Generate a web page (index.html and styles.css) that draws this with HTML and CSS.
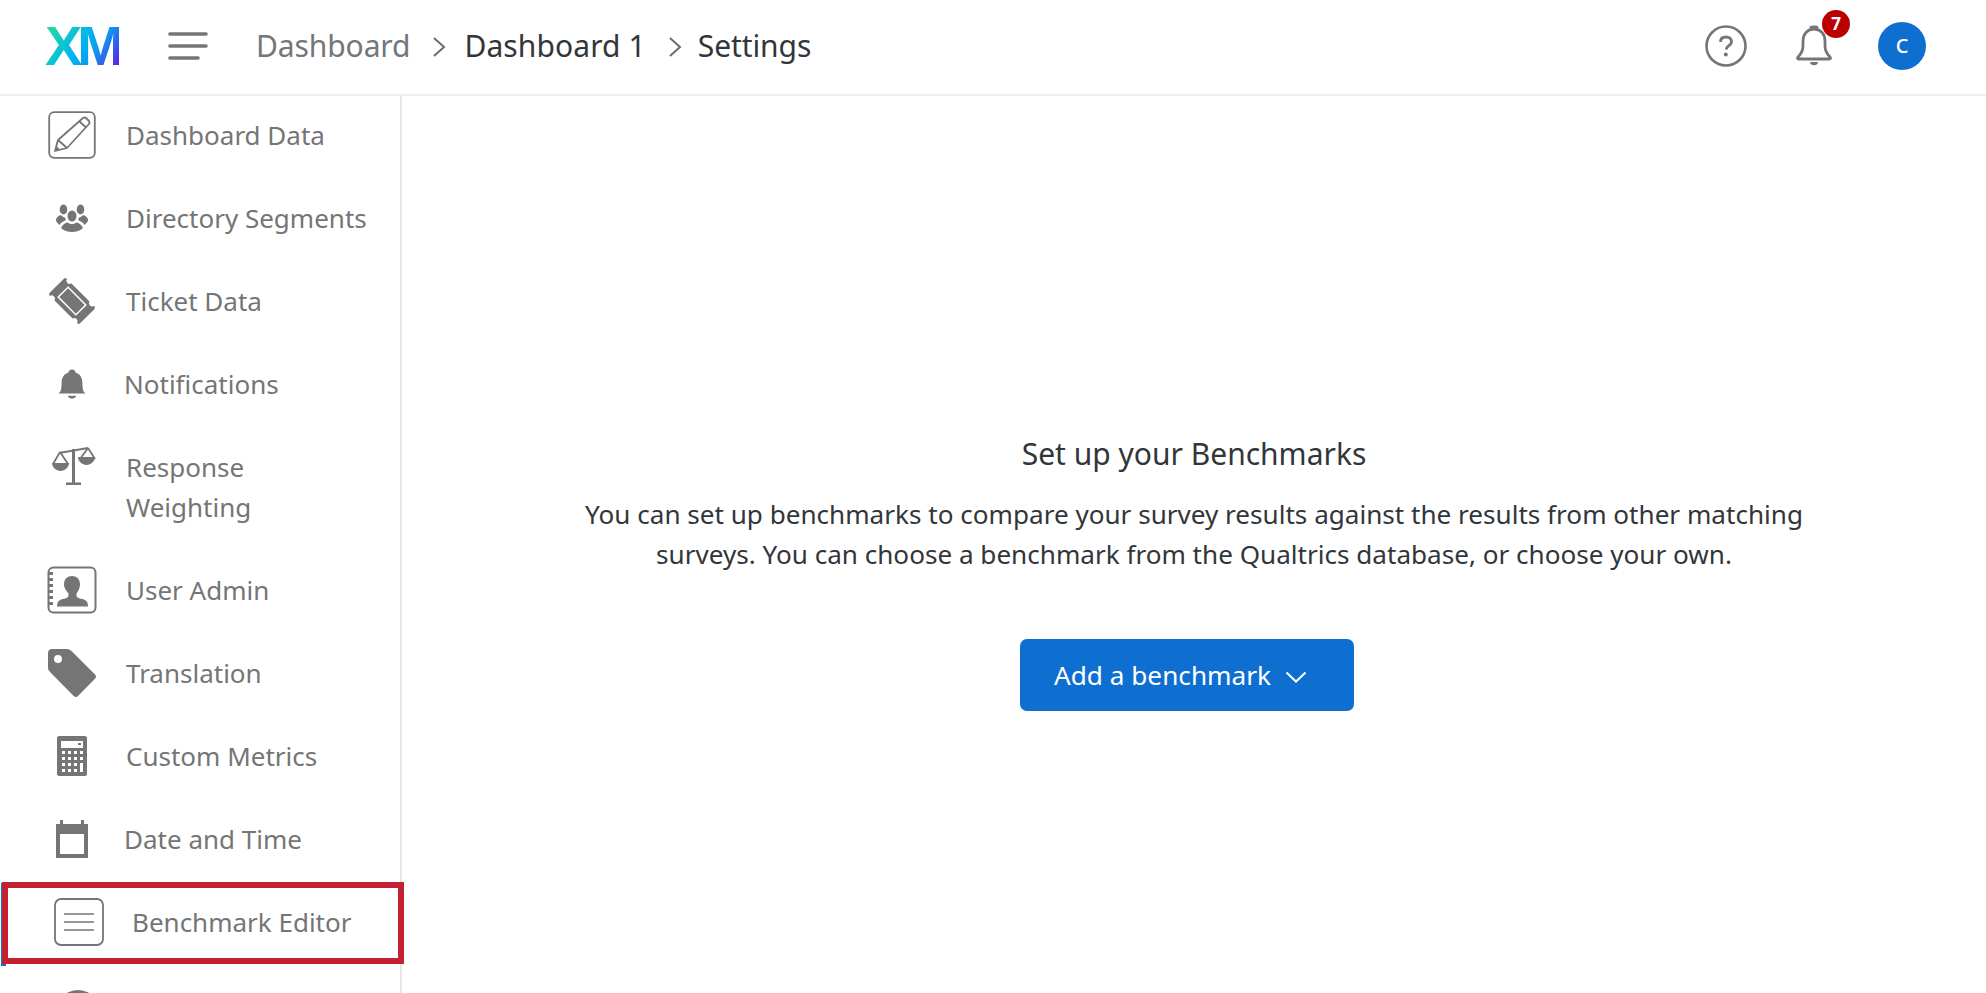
FILE: index.html
```html
<!DOCTYPE html>
<html lang="en">
<head>
<meta charset="utf-8">
<title>Settings</title>
<link rel="stylesheet" href="styles.css">
</head>
<body>
<header class="topbar">
  <div class="logo">XM</div>
  <svg class="burger" viewBox="0 0 40 28" width="40" height="28"><path d="M2 2h36M2 14h36M2 26h28" fill="none" stroke="#757575" stroke-width="3.600" stroke-linecap="round"/></svg>
  <nav class="crumbs">
    <span class="crumb-muted">Dashboard</span>
    <svg class="chev" viewBox="0 0 14 22" width="14" height="22"><path d="M2 2l10 9-10 9" fill="none" stroke="#6a6d70" stroke-width="2"/></svg>
    <span class="crumb-mid">Dashboard 1</span>
    <svg class="chev" viewBox="0 0 14 22" width="14" height="22"><path d="M2 2l10 9-10 9" fill="none" stroke="#6a6d70" stroke-width="2"/></svg>
    <span>Settings</span>
  </nav>
  <div class="actions">
    <svg class="help" viewBox="0 0 42 42" width="42" height="42"><circle cx="21" cy="21" r="19.500" fill="none" stroke="#757575" stroke-width="2.600"/><path d="M15.500 17c0-3.400 2.400-5 5.500-5s5.500 1.700 5.500 4.500c0 2.300-1.300 3.300-2.900 4.400-1.500 1-2.300 1.700-2.300 3.600" fill="none" stroke="#757575" stroke-width="2.800"/><circle cx="20.800" cy="29.500" r="2" fill="#757575"/></svg>
    <div class="bell">
      <svg viewBox="0 0 38 42" width="38" height="42"><path d="M3 32c3-3 5-6 5-11v-5C8 9 12.500 4 19 4s11 5 11 12v5c0 5 2 8 5 11 1 1 .5 2-.8 2H3.800C2.500 34 2 33 3 32z" fill="none" stroke="#757575" stroke-width="2.800" stroke-linejoin="round"/><path d="M15 2.800c1-1.300 7-1.300 8 0" fill="none" stroke="#757575" stroke-width="2.500"/><path d="M15 37h8c0 2-1.800 3.300-4 3.300s-4-1.300-4-3.300z" fill="#757575"/></svg>
      <span class="badge">7</span>
    </div>
    <div class="avatar">C</div>
  </div>
</header>
<div class="body-row">
  <aside class="sidebar">
    <ul class="menu">
      <li class="item item-first">
        <span class="ico"><svg viewBox="0 0 48 48" width="48" height="48"><rect x="1.200" y="1.200" width="45.600" height="45.600" rx="5" fill="none" stroke="#757575" stroke-width="1.800"/><path d="M7 40l3-11L35 7q2-1 3 0l3 3q1 2 0 3L19 37zM10 29l9 8M31.500 10.500l6.500 6" fill="none" stroke="#757575" stroke-width="1.800" stroke-linejoin="round"/><path d="M7 40l1.400-5 3.600 3.400z" fill="#757575"/></svg></span>
        <span class="label">Dashboard Data</span>
      </li>
      <li class="item">
        <span class="ico"><svg viewBox="0 0 32 28" width="32" height="28"><g fill="#757575"><ellipse cx="16" cy="12" rx="4.500" ry="5.500"/><path d="M5 24c1.500-3.500 4-5 6.500-5.500 1.500 1 3 1.500 4.500 1.500s3-.5 4.500-1.500c2.500.5 5 2 6.500 5.500-2.500 2.500-7 4-11 4s-8.500-1.500-11-4z"/><ellipse cx="7.500" cy="5.500" rx="3.800" ry="5"/><ellipse cx="24.500" cy="5.500" rx="3.800" ry="5"/><path d="M0 16c0-2 1-3 4.500-5l3 2 2 1v2.500c-3 1-5 2.500-6 4.500-1.500-1.500-3.500-3-3.500-5zM32 16c0-2-1-3-4.500-5l-3 2-2 1v2.500c3 1 5 2.500 6 4.500 1.500-1.500 3.500-3 3.500-5z"/></g></svg></span>
        <span class="label">Directory Segments</span>
      </li>
      <li class="item">
        <span class="ico"><svg viewBox="-24 -24 48 48" width="48" height="48"><g transform="rotate(45)"><rect x="-21.500" y="-12" width="43" height="24" rx="2" fill="#757575"/><g fill="#fff"><circle cx="-16" cy="-12.500" r="3"/><circle cx="16" cy="-12.500" r="3"/><circle cx="-16" cy="12.500" r="3"/><circle cx="16" cy="12.500" r="3"/></g><rect x="-12.500" y="-7" width="25" height="14" fill="none" stroke="#fff" stroke-width="1.500"/></g></svg></span>
        <span class="label">Ticket Data</span>
      </li>
      <li class="item item-tight">
        <span class="ico"><svg viewBox="6 8 36 38" width="30" height="32"><path fill="#757575" d="M10 36c1-2 1.500-5 1.500-10 0-7 3-11 8-12.500.3-2.500 2-4 4.500-4s4.200 1.500 4.500 4c5 1.500 8 5.500 8 12.500 0 5 .5 8 1.500 10l2 2.500H8zM19 41h10c-.5 2-2.500 3.500-5 3.500S19.500 43 19 41z"/></svg></span>
        <span class="label">Notifications</span>
      </li>
      <li class="item">
        <span class="ico ico-scale"><svg viewBox="0 0 45 40" width="45" height="40"><g fill="none" stroke="#757575" stroke-width="1.800"><path d="M8 7L37 2M9 6L2 18M9 6l8 12M37 2l-8 11M37 2l7 11"/></g><path fill="#757575" d="M1 17h17c0 4-4 8-8.500 8S1 21 1 17zM27 11h17c0 4-4 8-8.500 8S27 15 27 11zM21 3h3v34h-3zM15 36.500h15V39H15z"/></svg></span>
        <span class="label">Response Weighting</span>
      </li>
      <li class="item">
        <span class="ico"><svg viewBox="0 0 50 48" width="50" height="48"><rect x="1.500" y="1.500" width="47" height="45" rx="5" fill="none" stroke="#757575" stroke-width="2"/><path d="M1 6h5v3H1zM1 12h5v3H1zM1 18h5v3H1zM1 24h5v3H1zM1 30h5v3H1zM1 36h5v3H1z" fill="#757575"/><path fill="#757575" d="M25 10c5.500 0 8 4 8 8.500 0 4-2 7-3.500 9V30c0 1 2 2.500 5.500 3 4 .8 6 3 6 7.500H10c0-4.500 2-6.700 6-7.500 3.500-.5 5.500-2 5.500-3v-2.500C20 25.500 17 22.500 17 18.500c0-4.500 2.500-8.500 8-8.500z"/></svg></span>
        <span class="label">User Admin</span>
      </li>
      <li class="item">
        <span class="ico"><svg viewBox="0 0 48 48" width="48" height="48"><path fill-rule="evenodd" fill="#757575" d="M4 0h15c2 0 3.500 1 5 2.500l23 23c1.300 1.300 1.300 3 0 4.300L30 47c-1.300 1.300-3 1.300-4.300 0L2.500 23.500C1 22 0 20.500 0 18.500V4c0-2.500 1.800-4 4-4zm6 6a4 4 0 1 0 0 8 4 4 0 0 0 0-8z"/></svg></span>
        <span class="label">Translation</span>
      </li>
      <li class="item">
        <span class="ico"><svg viewBox="0 0 30 40" width="30" height="40"><path fill-rule="evenodd" fill="#757575" d="M2 0h26c1 0 2 1 2 2v36c0 1-1 2-2 2H2c-1 0-2-1-2-2V2C0 1 1 0 2 0zm2 5v7h22V5zm17 2h3v2h-3zM5 15v3h3v-3zm6 0v3h3v-3zm6 0v3h3v-3zm6 0v3h3v-3zM5 21v3h3v-3zm6 0v3h3v-3zm6 0v3h3v-3zm6 0v3h3v-3zM5 27v3h3v-3zm6 0v3h3v-3zm6 0v3h3v-3zm6 0v9h3v-9zM5 33v3h3v-3zm6 0v3h3v-3zm6 0v3h3v-3z"/></svg></span>
        <span class="label">Custom Metrics</span>
      </li>
      <li class="item item-tight">
        <span class="ico"><svg viewBox="0 0 32 38" width="32" height="38"><path fill-rule="evenodd" fill="#757575" d="M4 0h3v4h18V0h3v4h4v34H0V4h4zM4 14v20h24V14z"/></svg></span>
        <span class="label">Date and Time</span>
      </li>
      <li class="item item-active">
        <span class="ico"><svg viewBox="0 0 50 48" width="50" height="48"><rect x="1" y="1" width="48" height="46" rx="6" fill="none" stroke="#757575" stroke-width="1.800"/><path d="M10 16h30M10 24h30M10 32h30" stroke="#757575" stroke-width="1.500"/></svg></span>
        <span class="label">Benchmark Editor</span>
      </li>
      <li class="item">
        <span class="ico ico-clipped"><svg viewBox="0 0 44 44" width="44" height="44"><circle cx="22" cy="22" r="22" fill="#757575"/></svg></span>
      </li>
    </ul>
  </aside>
  <main class="content">
    <h1 class="title">Set up your Benchmarks</h1>
    <p class="desc">You can set up benchmarks to compare your survey results against the results from other matching surveys. You can choose a benchmark from the Qualtrics database, or choose your own.</p>
    <button class="btn" type="button">Add a benchmark
      <svg viewBox="0 0 22 12" width="22" height="12"><path d="M1.500 1.500l9.500 9 9.500-9" fill="none" stroke="#fff" stroke-width="2"/></svg>
    </button>
  </main>
</div>
</body>
</html>
```
FILE: styles.css
```css
*, *::before, *::after { box-sizing: border-box; }
html, body { margin: 0; height: 100%; overflow: hidden; }
body { font-family: "Noto Sans", "Open Sans", sans-serif; background: #fff; color: #32363a; }

.topbar { height: 96px; display: flex; align-items: center; border-bottom: 2px solid #eeeeee; padding: 0 0 2px 45px; }
.logo {
  font-family: "Liberation Sans", sans-serif; font-weight: 700; font-size: 56px; line-height: 40px; height: 40px;
  letter-spacing: -5px; width: 74px;
  background: linear-gradient(125deg, #21dba4 5%, #00b4ef 48%, #0a9fee 65%, #5f1ae5 100%);
  -webkit-background-clip: text; background-clip: text; color: transparent;
}
.burger { margin-left: 49px; }
.crumbs { display: flex; align-items: center; margin-left: 48px; font-size: 30px; letter-spacing: -0.1px; line-height: 40px; margin-top: -1px; }
.crumb-muted { color: #73767a; }
.crumb-mid { letter-spacing: 0.1px; }
.chev { margin: 3px 18px 0 22px; }
.chev + span + .chev { margin-left: 22px; margin-right: 16px; }
.actions { margin-left: auto; margin-right: 60px; display: flex; align-items: center; }
.help { display: block; }
.bell { position: relative; margin-left: 48px; height: 42px; }
.badge {
  position: absolute; left: 27px; top: -15px; width: 28px; height: 28px; border-radius: 50%;
  background: #bb0000; color: #fff; font-size: 17px; font-weight: 700; line-height: 28px; text-align: center;
}
.avatar {
  margin-left: 45px; width: 48px; height: 48px; border-radius: 50%; background: #0f6fd1; color: #fff;
  font-size: 20px; font-weight: 500; line-height: 48px; text-align: center;
}

.body-row { display: flex; height: 897px; overflow: hidden; }
.sidebar { width: 402px; flex: none; border-right: 2px solid #e6e6e6; }
.menu { list-style: none; margin: 0; padding: 0 0 0 47px; color: #757575; font-size: 26px; line-height: 40px; }
.item { display: flex; align-items: flex-start; padding-top: 19px; padding-bottom: 24px; position: relative; }
.item-first { padding-top: 0; margin-top: 19px; }
.ico { width: 50px; height: 40px; flex: none; display: flex; align-items: center; justify-content: center; margin-right: 29px; }
.item-tight .ico { margin-right: 27px; }
.ico-scale { margin-left: 1px; margin-right: 28px; margin-top: -1px; }
.ico-clipped { margin-left: 6px; margin-top: 7px; }
.label { width: 245px; }
.item-active .ico { margin-left: 7px; margin-right: 28px; }
.item-active::before {
  content: ""; position: absolute; left: -46px; top: 0; width: 5px; height: 83px; background: #0b7ac4;
}
.item-active::after {
  content: ""; position: absolute; left: -45px; top: -1px; width: 402px; height: 82px; border: 6px solid #c32032;
}

.content { flex: 1; display: flex; flex-direction: column; align-items: center; padding-top: 338px; }
.title { margin: 0; font-size: 30px; font-weight: 400; line-height: 40px; }
.desc { margin: 20px 0 0; width: 1240px; font-size: 26.1px; line-height: 40px; text-align: center; }
.btn {
  margin-top: 65px; margin-right: 14px; width: 334px; height: 72px; border: 0; border-radius: 7px; background: #0f6fd1; color: #fff;
  font: inherit; font-size: 26.2px; display: flex; align-items: center; justify-content: flex-start; gap: 14px; padding: 0 0 0 34px;
}
.btn svg { margin-top: 3px; }
```
